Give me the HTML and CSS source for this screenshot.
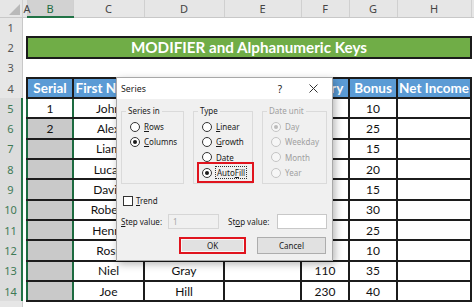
FILE: index.html
```html
<!DOCTYPE html>
<html lang="en">
<head>
    <meta charset="UTF-8" />
    <title>Series - AutoFill</title>
    <link rel="stylesheet" href="styles.css">
</head>
<body>
    <div class="sheet">
        <table class="grid">
            <colgroup>
                <col class="c-rn"><col class="c-a"><col class="c-b"><col class="c-c"><col class="c-d">
                <col class="c-e"><col class="c-f"><col class="c-g"><col class="c-h"><col class="c-i">
            </colgroup>
            <tr class="hdr">
                <th class="corner"><span class="tri"></span></th>
                <th class="col-a">A</th>
                <th class="sel">B</th>
                <th>C</th>
                <th>D</th>
                <th>E</th>
                <th>F</th>
                <th>G</th>
                <th>H</th>
                <th></th>
            </tr>
            <tr><th class="rn">1</th><td></td><td></td><td></td><td></td><td></td><td></td><td></td><td></td><td></td></tr>
            <tr><th class="rn">2</th><td></td><td colspan="7" class="title">MODIFIER and Alphanumeric Keys</td><td></td></tr>
            <tr><th class="rn">3</th><td></td><td></td><td></td><td></td><td></td><td></td><td></td><td></td><td></td></tr>
            <tr class="head">
                <th class="rn">4</th><td></td>
                <td class="t h">Serial</td><td class="t h">First Name</td><td class="t h"></td><td class="t h"></td>
                <td class="t h">Salary</td><td class="t h">Bonus</td><td class="t h">Net Income</td><td></td>
            </tr>
            <tr><th class="rn on">5</th><td></td><td class="t b act">1</td><td class="t">John</td><td class="t"></td><td class="t"></td><td class="t"></td><td class="t">10</td><td class="t"></td><td></td></tr>
            <tr><th class="rn on">6</th><td></td><td class="t b">2</td><td class="t">Alex</td><td class="t"></td><td class="t"></td><td class="t"></td><td class="t">25</td><td class="t"></td><td></td></tr>
            <tr><th class="rn on">7</th><td></td><td class="t b"></td><td class="t">Liam</td><td class="t"></td><td class="t"></td><td class="t"></td><td class="t">15</td><td class="t"></td><td></td></tr>
            <tr><th class="rn on">8</th><td></td><td class="t b"></td><td class="t">Lucas</td><td class="t"></td><td class="t"></td><td class="t"></td><td class="t">20</td><td class="t"></td><td></td></tr>
            <tr><th class="rn on">9</th><td></td><td class="t b"></td><td class="t">David</td><td class="t"></td><td class="t"></td><td class="t"></td><td class="t">15</td><td class="t"></td><td></td></tr>
            <tr><th class="rn on">10</th><td></td><td class="t b"></td><td class="t">Robert</td><td class="t"></td><td class="t"></td><td class="t"></td><td class="t">30</td><td class="t"></td><td></td></tr>
            <tr><th class="rn on">11</th><td></td><td class="t b"></td><td class="t">Henry</td><td class="t"></td><td class="t"></td><td class="t"></td><td class="t">25</td><td class="t"></td><td></td></tr>
            <tr><th class="rn on">12</th><td></td><td class="t b"></td><td class="t">Ross</td><td class="t"></td><td class="t"></td><td class="t"></td><td class="t">10</td><td class="t"></td><td></td></tr>
            <tr><th class="rn on">13</th><td></td><td class="t b"></td><td class="t">Niel</td><td class="t">Gray</td><td class="t"></td><td class="t">110</td><td class="t">35</td><td class="t"></td><td></td></tr>
            <tr><th class="rn on">14</th><td></td><td class="t b"></td><td class="t">Joe</td><td class="t">Hill</td><td class="t"></td><td class="t">230</td><td class="t">40</td><td class="t"></td><td></td></tr>
            <tr><th class="rn"></th><td></td><td></td><td></td><td></td><td></td><td></td><td></td><td></td><td></td></tr>
        </table>

        <!-- Series dialog -->
        <div class="dialog">
            <div class="dlg-title">
                <span class="dlg-name">Series</span>
                <span class="dlg-help">?</span>
                <svg class="dlg-close" width="9" height="9" viewBox="0 0 9 9">
                    <path d="M0.5 0.5 L8.5 8.5 M8.5 0.5 L0.5 8.5" stroke="#333" stroke-width="1" fill="none"/>
                </svg>
            </div>
            <div class="dlg-body">
                <div class="groups">
                    <fieldset class="grp g-in">
                        <legend>Series in</legend>
                        <div class="opt"><span class="radio"></span><span><u>R</u>ows</span></div>
                        <div class="opt"><span class="radio on"></span><span><u>C</u>olumns</span></div>
                    </fieldset>
                    <fieldset class="grp g-type">
                        <legend>Type</legend>
                        <div class="opt"><span class="radio"></span><span><u>L</u>inear</span></div>
                        <div class="opt"><span class="radio"></span><span><u>G</u>rowth</span></div>
                        <div class="opt"><span class="radio"></span><span>Date</span></div>
                        <div class="opt hl"><span class="radio on"></span><span class="focus">Auto<u>F</u>ill</span></div>
                    </fieldset>
                    <fieldset class="grp g-unit off">
                        <legend>Date unit</legend>
                        <div class="opt"><span class="radio on"></span><span>Day</span></div>
                        <div class="opt"><span class="radio"></span><span>Weekday</span></div>
                        <div class="opt"><span class="radio"></span><span>Month</span></div>
                        <div class="opt"><span class="radio"></span><span>Year</span></div>
                    </fieldset>
                </div>

                <div class="trend"><span class="check"></span><span><u>T</u>rend</span></div>

                <div class="values">
                    <span><u>S</u>tep value:</span>
                    <span class="field dis">1</span>
                    <span>St<u>o</u>p value:</span>
                    <span class="field"></span>
                </div>

                <div class="buttons">
                    <button class="btn ok">OK</button>
                    <button class="btn">Cancel</button>
                </div>
            </div>
        </div>
    </div>
</body>
</html>
```

FILE: styles.css
```css
body {
    margin: 0;
    background: #ffffff;
    overflow: hidden;
    font-family: Lato, 'Open Sans', sans-serif;
}

.sheet {
    position: relative;
    width: 474px;
    height: 307px;
    overflow: hidden;
}

/* worksheet grid */
.grid {
    table-layout: fixed;
    border-collapse: collapse;
    width: 474px;
}

.c-rn { width: 22px; }
.c-a { width: 5px; }
.c-b { width: 46px; }
.c-c { width: 71px; }
.c-d { width: 80px; }
.c-e { width: 77px; }
.c-f { width: 48px; }
.c-g { width: 48px; }
.c-h { width: 74px; }
.c-i { width: 3px; }

.grid td,
.grid th {
    padding: 0;
    text-align: center;
    vertical-align: middle;
    white-space: nowrap;
    overflow: hidden;
}

.grid tr {
    height: 20.3px;
}

.grid .hdr {
    height: 17px;
}

.hdr th {
    background: #e6e6e6;
    color: #444;
    font-family: 'Noto Sans', sans-serif;
    font-weight: normal;
    font-size: 11px;
    border-right: 1px solid #d0d0d0;
    border-bottom: 1px solid #c8c8c8;
}

.hdr .corner {
    position: relative;
}

.corner .tri {
    position: absolute;
    right: 2px;
    bottom: 2px;
    border-left: 11px solid transparent;
    border-bottom: 11px solid #b9b9b9;
}

.hdr .col-a {
    overflow: visible;
    text-align: left;
    text-indent: 1px;
}

.hdr .sel {
    background: #d2d2d2;
    color: #1f6b3f;
    border-bottom: 2px solid #217346;
}

.rn {
    background: #e6e6e6;
    color: #555;
    font-family: 'Noto Sans', sans-serif;
    font-weight: normal;
    font-size: 11px;
    border-right: 1px solid #c8c8c8;
}

.rn.on {
    background: #dcdcdc;
    color: #3f7a56;
    border-right: 2px solid #217346;
}

.title {
    background: #70ad47;
    border: 2px solid #1b1b1b;
    color: #ffffff;
    font-weight: bold;
    font-size: 15.2px;
}

.t {
    border: 2px solid #1c1c1c;
    font-size: 12px;
    color: #111;
}

.t.h {
    background: #5b9bd5;
    color: #ffffff;
    font-weight: bold;
    font-size: 13.5px;
}

.t.b {
    background: #c9c9c9;
    border-left-color: #1d6b40;
    border-right-color: #1d6b40;
}

.t.b.act {
    background: #ffffff;
}

/* dialog */
.dialog {
    position: absolute;
    left: 116px;
    top: 77px;
    width: 217px;
    height: 184px;
    box-sizing: border-box;
    border: 1px solid #a8a8a8;
    background: #f0f0f0;
    box-shadow: 2px 3px 8px rgba(0, 0, 0, 0.3);
    font-family: 'Noto Sans', sans-serif;
    font-size: 8px;
    color: #1a1a1a;
}

.dlg-title {
    height: 21px;
    background: #ffffff;
    display: flex;
    align-items: center;
    padding-left: 4px;
}

.dlg-name {
    font-size: 8.8px;
    flex: 1;
}

.dlg-help {
    font-size: 10px;
    margin-right: 27px;
}

.dlg-close {
    margin-right: 14px;
}

.dlg-body {
    padding: 6px 5px 0 4px;
}

.groups {
    display: flex;
    gap: 9px;
}

.grp {
    position: relative;
    margin: 0;
    padding: 2px 0 0 8px;
    height: 79px;
    box-sizing: border-box;
    border: 1px solid #dadada;
}

.g-in { width: 63px; }
.g-type { width: 60px; }
.g-unit { width: 65px; }

.grp legend {
    padding: 0 2px;
    margin-left: -4px;
    line-height: 12px;
}

.opt {
    height: 15.3px;
    display: flex;
    align-items: center;
    gap: 4px;
    position: relative;
}

.radio {
    width: 10px;
    height: 10px;
    box-sizing: border-box;
    border: 1px solid #333;
    border-radius: 50%;
    background: #ffffff;
    position: relative;
    flex: none;
}

.radio.on::after {
    content: "";
    position: absolute;
    left: 2px;
    top: 2px;
    width: 4px;
    height: 4px;
    border-radius: 50%;
    background: #1a1a1a;
}

.off {
    color: #a0a0a0;
}

.off .radio {
    border-color: #c4c4c4;
    background: #f6f6f6;
}

.off .radio.on::after {
    background: #bcbcbc;
}

.focus {
    outline: 1px dotted #333;
    padding: 0 1px;
}

.hl::after {
    content: "";
    position: absolute;
    left: -5px;
    right: -2px;
    top: -3px;
    bottom: -3px;
    border: 2px solid #e0141e;
}

.trend {
    display: flex;
    align-items: center;
    gap: 3px;
    margin: 11px 0 0 2px;
    height: 11px;
}

.check {
    width: 10px;
    height: 10px;
    box-sizing: border-box;
    border: 1px solid #333;
    background: #ffffff;
}

.values {
    display: grid;
    grid-template-columns: 47px 60px 49px 50px;
    align-items: center;
    margin-top: 8px;
    height: 15px;
}

.values .field {
    height: 15px;
    box-sizing: border-box;
    border: 1px solid #c8c8c8;
    background: #ffffff;
    padding-left: 4px;
    line-height: 13px;
}

.values .field.dis {
    background: #f0f0f0;
    border-color: #d6d6d6;
    color: #a8a8a8;
    margin-right: 9px;
}

.buttons {
    display: flex;
    justify-content: flex-end;
    gap: 11px;
    margin-top: 8px;
    padding-right: 1px;
}

.btn {
    height: 17px;
    box-sizing: border-box;
    border: 1px solid #adadad;
    background: #e1e1e1;
    font-family: 'Noto Sans', sans-serif;
    font-size: 8px;
    color: #1a1a1a;
    padding: 0;
    width: 69px;
}

.btn.ok {
    width: 67px;
    border: 2px solid #e0141e;
    box-shadow: inset 0 0 0 1px #f6f6f6;
}
```
